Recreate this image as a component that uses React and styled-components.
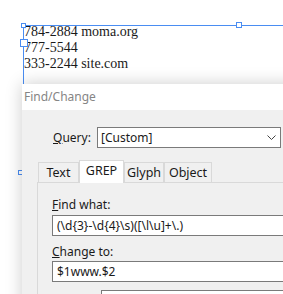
import React from "react";
import styled, { createGlobalStyle } from "styled-components";

const GlobalStyles = createGlobalStyle`
  * {
    margin: 0;
    padding: 0;
    box-sizing: border-box;
  }
  html, body {
    background: #fff;
    font-family: "Noto Sans", "Open Sans", sans-serif;
    overflow: hidden;
  }
`;

const lines = ["784-2884 moma.org", "777-5544", "333-2244 site.com"];
const tabs = ["Text", "GREP", "Glyph", "Object"];
const tabWidths = { Text: 41, GREP: 45, Glyph: 40, Object: 48 };

const App = () => {
    return (
        <>
            <GlobalStyles />
            <Page>
                <Frame>
                    <Handle $x={-3} $y={-3} $size={5} />
                    <Handle $x={212} $y={-4} $size={6} />
                    <Handle $x={-4} $y={13} $size={8} />
                    <Handle $x={-6} $y={144} $size={5} />
                    <Story>
                        {lines.map((l) => (
                            <Line key={l}>{l}</Line>
                        ))}
                    </Story>
                </Frame>
                <Dialog>
                    <TitleBar>Find/Change</TitleBar>
                    <Body>
                        <QueryRow>
                            <Label>
                                <u>Q</u>uery:
                            </Label>
                            <Select>
                                <span>[Custom]</span>
                                <svg viewBox="0 0 9 5" width="9" height="5">
                                    <polyline
                                        points="0.5,0.5 4.5,4.5 8.5,0.5"
                                        fill="none"
                                        stroke="#444"
                                        strokeWidth="1"
                                    />
                                </svg>
                            </Select>
                        </QueryRow>
                        <TabRow>
                            {tabs.map((t) => (
                                <Tab
                                    key={t}
                                    $active={t === "GREP"}
                                    $w={tabWidths[t]}
                                >
                                    {t}
                                </Tab>
                            ))}
                        </TabRow>
                        <Panel>
                            <Field>
                                <FieldLabel>
                                    <u>F</u>ind what:
                                </FieldLabel>
                                <Input>{"(\\d{3}-\\d{4}\\s)([\\l\\u]+\\.)"}</Input>
                            </Field>
                            <Field $gap={1}>
                                <FieldLabel>
                                    <u>C</u>hange to:
                                </FieldLabel>
                                <Input>$1www.$2</Input>
                            </Field>
                            <Box />
                        </Panel>
                    </Body>
                </Dialog>
            </Page>
        </>
    );
};

const Page = styled.div`
    position: relative;
    width: 100%;
    height: 294px;
    overflow: hidden;
    background: #fff;
    padding: 25px 0 0 23px;
`;

const Frame = styled.div`
    position: relative;
    height: 240px;
    border-top: 1px solid #4a8df2;
    border-left: 1px solid #4a8df2;
`;

const Handle = styled.span`
    position: absolute;
    left: ${(p) => p.$x}px;
    top: ${(p) => p.$y}px;
    width: ${(p) => p.$size}px;
    height: ${(p) => p.$size}px;
    background: #fff;
    border: 1px solid #4a8df2;
`;

const Story = styled.div`
    margin-top: -2px;
    font-family: "Liberation Serif", "Times New Roman", serif;
    font-size: 14px;
    line-height: 16px;
    color: #1a1a1a;
`;

const Line = styled.div``;

const Dialog = styled.div`
    position: absolute;
    left: 22px;
    top: 84px;
    right: -60px;
    height: 240px;
    display: flex;
    flex-direction: column;
    box-shadow: 0 0 16px rgba(0, 0, 0, 0.2);
    font-size: 12px;
    color: #1a1a1a;
`;

const TitleBar = styled.div`
    height: 26px;
    line-height: 26px;
    padding-left: 2px;
    background: #fff;
    color: #858585;
`;

const Body = styled.div`
    flex: 1;
    display: flex;
    flex-direction: column;
    background: #f0f0f0;
    padding-top: 17px;
`;

const QueryRow = styled.div`
    display: flex;
    align-items: center;
    gap: 5px;
    padding-left: 31px;
`;

const Label = styled.span`
    width: 39px;
`;

const Select = styled.div`
    display: flex;
    align-items: center;
    justify-content: space-between;
    width: 184px;
    height: 21px;
    padding: 0 4px 0 3px;
    background: #fff;
    border: 1px solid #7a7a7a;
`;

const TabRow = styled.div`
    display: flex;
    align-items: flex-end;
    height: 22px;
    margin-top: 12px;
    padding-left: 16px;
`;

const Tab = styled.div`
    position: relative;
    z-index: ${(p) => (p.$active ? 1 : 0)};
    width: ${(p) => p.$w}px;
    height: ${(p) => (p.$active ? 23 : 20)}px;
    margin-bottom: ${(p) => (p.$active ? -1 : 0)}px;
    line-height: ${(p) => (p.$active ? 20 : 19)}px;
    text-align: center;
    font-size: 12.5px;
    background: ${(p) => (p.$active ? "#fff" : "#f0f0f0")};
    border: 1px solid #d9d9d9;
    border-bottom: none;
`;

const Panel = styled.div`
    flex: 1;
    display: flex;
    flex-direction: column;
    gap: 8px;
    margin-left: 15px;
    border-top: 1px solid #d9d9d9;
    border-left: 1px solid #d9d9d9;
    padding: 14px 0 0 14px;
`;

const Field = styled.div`
    display: flex;
    flex-direction: column;
    gap: ${(p) => (p.$gap === undefined ? 2 : p.$gap)}px;
`;

const FieldLabel = styled.div`
    line-height: 16px;
`;

const Input = styled.div`
    height: 21px;
    padding-left: 4px;
    line-height: 19px;
    white-space: nowrap;
    background: #fff;
    border: 1px solid #7a7a7a;
`;

const Box = styled.div`
    height: 20px;
    margin-left: 49px;
    background: #fff;
    border: 1px solid #7a7a7a;
`;

export default App;
